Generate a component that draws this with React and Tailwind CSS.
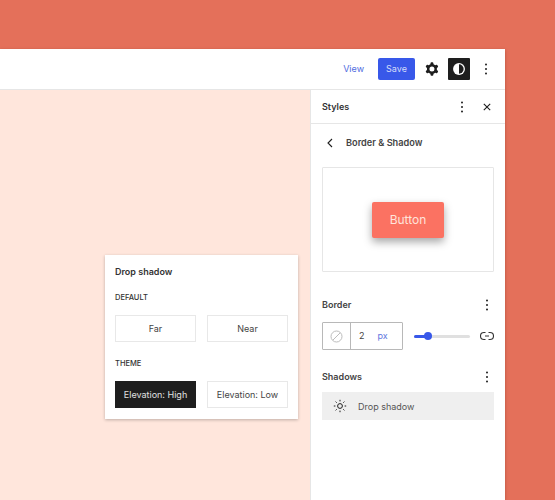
import React from 'react';

const Dots = () => (
  <svg width="16" height="16" viewBox="0 0 16 16" className="fill-[#1e1e1e]">
    <circle cx="8" cy="3.5" r="1" />
    <circle cx="8" cy="8" r="1" />
    <circle cx="8" cy="12.5" r="1" />
  </svg>
);

const OptionButton = ({ label, dark }) => (
  <div
    className={`flex h-[27px] w-[81px] items-center justify-center border pt-[1px] text-[9px] ${
      dark ? 'border-[#1e1e1e] bg-[#1e1e1e] text-[#e0e0e0]' : 'border-[#e8e8e8] bg-white text-[#444]'
    }`}
  >
    {label}
  </div>
);

const SunIcon = () => (
  <svg width="14" height="14" viewBox="0 0 14 14" fill="none" stroke="#1e1e1e" strokeWidth="1">
    <circle cx="7" cy="7" r="2.4" />
    <path d="M7 .8v1.6M7 11.6v1.6M.8 7h1.6M11.6 7h1.6M2.6 2.6l1.1 1.1M10.3 10.3l1.1 1.1M2.6 11.4l1.1-1.1M10.3 3.7l1.1-1.1" />
  </svg>
);

const CogIcon = () => (
  <svg width="20" height="20" viewBox="0 0 24 24" className="mr-[6px] fill-[#1e1e1e]">
    <path
      fillRule="evenodd"
      clipRule="evenodd"
      d="M10.289 4.836A1 1 0 0 1 11.275 4h1.306a1 1 0 0 1 .987.836l.244 1.466c.787.26 1.503.679 2.108 1.218l1.393-.522a1 1 0 0 1 1.216.437l.653 1.13a1 1 0 0 1-.23 1.273l-1.148.944a6.025 6.025 0 0 1 0 2.435l1.149.946a1 1 0 0 1 .23 1.272l-.653 1.13a1 1 0 0 1-1.216.437l-1.394-.522c-.605.54-1.32.958-2.108 1.218l-.244 1.466a1 1 0 0 1-.987.836h-1.306a1 1 0 0 1-.986-.836l-.244-1.466a5.995 5.995 0 0 1-2.108-1.218l-1.394.522a1 1 0 0 1-1.217-.436l-.653-1.131a1 1 0 0 1 .23-1.272l1.149-.946a6.026 6.026 0 0 1 0-2.435l-1.148-.944a1 1 0 0 1-.23-1.272l.653-1.131a1 1 0 0 1 1.217-.437l1.393.522a5.994 5.994 0 0 1 2.108-1.218l.244-1.466zM14.929 12a3 3 0 1 1-6 0 3 3 0 0 1 6 0z"
    />
  </svg>
);

const App = () => {
  return (
    <div className="h-[500px] w-[555px] overflow-hidden bg-[#e4705a] pt-[49px] pr-[50px] font-['Inter',sans-serif]">
      <div className="flex h-[451px] flex-col bg-white shadow-[0_1px_3px_rgba(90,30,10,0.35)]">
        <div className="flex h-[41px] shrink-0 items-center justify-end border-b border-[#e6e6e6] pr-[11px]">
          <span className="mr-[14px] text-[9px] text-[#4f6ce0]">View</span>
          <div className="mr-[7px] flex h-[22px] w-[37px] items-center justify-center rounded-[2px] bg-[#3858e9] text-[9px] text-[#d5dcfa]">
            Save
          </div>
          <CogIcon />
          <div className="mr-[8px] flex h-[22px] w-[22px] items-center justify-center rounded-[1px] bg-[#1e1e1e]">
            <svg width="14" height="14" viewBox="0 0 13 13">
              <circle cx="6.5" cy="6.5" r="5.5" fill="#fff" />
              <path d="M6.5 2.2a4.3 4.3 0 0 1 0 8.6z" fill="#1e1e1e" />
            </svg>
          </div>
          <Dots />
        </div>

        <div className="flex min-h-0 flex-1">
          <div className="flex-1 bg-[#ffe6dc] pl-[105px] pt-[165px]">
            <div className="h-[164px] w-[193px] bg-white px-[10px] pt-[11px] shadow-[0_1px_3px_rgba(0,0,0,0.25)]">
              <div className="text-[9px] font-semibold leading-[11px] text-[#333]">Drop shadow</div>
              <div className="mt-[16px] text-[7.5px] font-medium leading-[10px] text-[#333]">DEFAULT</div>
              <div className="mt-[12px] flex justify-between">
                <OptionButton label="Far" />
                <OptionButton label="Near" />
              </div>
              <div className="mt-[17px] text-[7.5px] font-medium leading-[10px] text-[#333]">THEME</div>
              <div className="mt-[12px] flex justify-between">
                <OptionButton label="Elevation: High" dark />
                <OptionButton label="Elevation: Low" />
              </div>
            </div>
          </div>

          <div className="w-[195px] shrink-0 border-l border-[#e6e6e6] bg-white">
            <div className="flex h-[34px] items-center border-b border-[#e6e6e6] pl-[11px] pr-[11px]">
              <span className="flex-1 pt-[1px] text-[9px] font-semibold text-[#333]">Styles</span>
              <Dots />
              <svg width="14" height="14" viewBox="0 0 14 14" className="ml-[10px]" fill="none" stroke="#1e1e1e" strokeWidth="1.1">
                <path d="M3.8 3.8l6.4 6.4M10.2 3.8l-6.4 6.4" />
              </svg>
            </div>

            <div className="flex h-[38px] items-center pl-[15px]">
              <svg width="8" height="12" viewBox="0 0 8 12" fill="none" stroke="#1e1e1e" strokeWidth="1.1">
                <path d="M6 2L2 6l4 4" />
              </svg>
              <span className="ml-[12px] text-[9.2px] font-semibold text-[#444]">Border &amp; Shadow</span>
            </div>

            <div className="mx-[11px] mt-[5px] flex h-[105px] items-center justify-center rounded-[1px] border border-[#e6e6e6]">
              <div className="flex h-[36px] w-[72px] items-center justify-center rounded-[2px] bg-[#fb7262] text-[12px] text-[#ffe3db] shadow-[0_4px_8px_rgba(0,0,0,0.35)]">
                Button
              </div>
            </div>

            <div className="mt-[25px] flex items-center justify-between pl-[11px] pr-[10px]">
              <span className="text-[9px] font-semibold text-[#444]">Border</span>
              <Dots />
            </div>

            <div className="mt-[9px] flex items-center pl-[11px]">
              <div className="flex h-[28px] w-[81px] items-center rounded-[1px] border border-[#b8b8b8]">
                <div className="flex h-full w-[28px] items-center justify-center border-r border-[#b8b8b8]">
                  <svg width="13" height="13" viewBox="0 0 13 13" fill="none" stroke="#bdbdbd" strokeWidth="1">
                    <circle cx="6.5" cy="6.5" r="5.5" />
                    <path d="M2.8 10.2l7.4-7.4" />
                  </svg>
                </div>
                <span className="ml-[8px] text-[9px] text-[#444]">2</span>
                <span className="ml-[13px] text-[9px] text-[#5f78e0]">px</span>
              </div>
              <div className="relative ml-[11px] h-[3px] w-[56px] rounded-full bg-[#e0e0e0]">
                <div className="h-full w-[14px] rounded-full bg-[#3858e9]" />
                <div className="absolute left-[10px] top-[-2.5px] h-[8px] w-[8px] rounded-full bg-[#3858e9]" />
              </div>
              <svg width="14" height="10" viewBox="0 0 14 10" className="ml-[10px]" fill="none" stroke="#333" strokeWidth="1.1">
                <path d="M5.5 1.5H4a3.5 3.5 0 0 0 0 7h1.5M8.5 1.5H10a3.5 3.5 0 0 1 0 7H8.5M5 5h4" />
              </svg>
            </div>

            <div className="mt-[19px] flex items-center justify-between pl-[11px] pr-[10px]">
              <span className="text-[9px] font-semibold text-[#444]">Shadows</span>
              <Dots />
            </div>

            <div className="mx-[11px] mt-[7px] flex h-[28px] items-center bg-[#efefef] pl-[11px]">
              <SunIcon />
              <span className="ml-[11px] pt-[1px] text-[9px] text-[#555]">Drop shadow</span>
            </div>
          </div>
        </div>
      </div>
    </div>
  );
};

export default App;
